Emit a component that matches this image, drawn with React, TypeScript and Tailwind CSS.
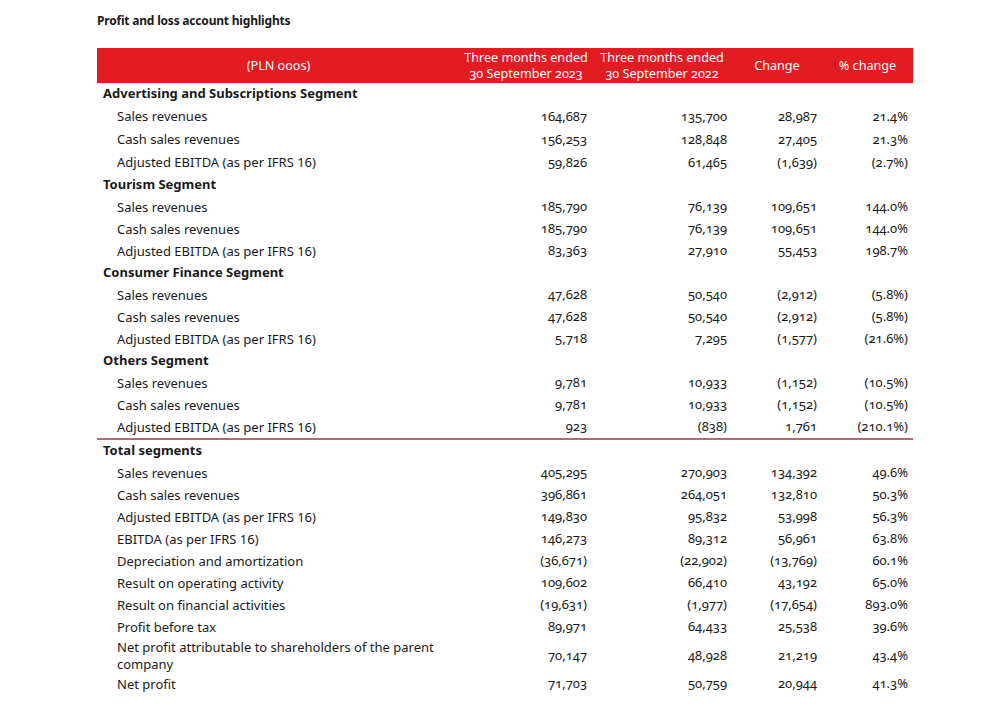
type Row = {
  label: string;
  values?: string[];
  kind: "section" | "item";
  h?: string;
};

const rows: Row[] = [
  { label: "Advertising and Subscriptions Segment", kind: "section", h: "h-[22px]" },
  { label: "Sales revenues", values: ["164,687", "135,700", "28,987", "21.4%"], kind: "item", h: "h-[23px]" },
  { label: "Cash sales revenues", values: ["156,253", "128,848", "27,405", "21.3%"], kind: "item", h: "h-[23px]" },
  { label: "Adjusted EBITDA (as per IFRS 16)", values: ["59,826", "61,465", "(1,639)", "(2.7%)"], kind: "item", h: "h-[23px]" },
  { label: "Tourism Segment", kind: "section" },
  { label: "Sales revenues", values: ["185,790", "76,139", "109,651", "144.0%"], kind: "item" },
  { label: "Cash sales revenues", values: ["185,790", "76,139", "109,651", "144.0%"], kind: "item" },
  { label: "Adjusted EBITDA (as per IFRS 16)", values: ["83,363", "27,910", "55,453", "198.7%"], kind: "item" },
  { label: "Consumer Finance Segment", kind: "section" },
  { label: "Sales revenues", values: ["47,628", "50,540", "(2,912)", "(5.8%)"], kind: "item" },
  { label: "Cash sales revenues", values: ["47,628", "50,540", "(2,912)", "(5.8%)"], kind: "item" },
  { label: "Adjusted EBITDA (as per IFRS 16)", values: ["5,718", "7,295", "(1,577)", "(21.6%)"], kind: "item" },
  { label: "Others Segment", kind: "section" },
  { label: "Sales revenues", values: ["9,781", "10,933", "(1,152)", "(10.5%)"], kind: "item" },
  { label: "Cash sales revenues", values: ["9,781", "10,933", "(1,152)", "(10.5%)"], kind: "item" },
  { label: "Adjusted EBITDA (as per IFRS 16)", values: ["923", "(838)", "1,761", "(210.1%)"], kind: "item" },
];

const totals: Row[] = [
  { label: "Total segments", kind: "section" },
  { label: "Sales revenues", values: ["405,295", "270,903", "134,392", "49.6%"], kind: "item" },
  { label: "Cash sales revenues", values: ["396,861", "264,051", "132,810", "50.3%"], kind: "item" },
  { label: "Adjusted EBITDA (as per IFRS 16)", values: ["149,830", "95,832", "53,998", "56.3%"], kind: "item" },
  { label: "EBITDA (as per IFRS 16)", values: ["146,273", "89,312", "56,961", "63.8%"], kind: "item" },
  { label: "Depreciation and amortization", values: ["(36,671)", "(22,902)", "(13,769)", "60.1%"], kind: "item" },
  { label: "Result on operating activity", values: ["109,602", "66,410", "43,192", "65.0%"], kind: "item" },
  { label: "Result on financial activities", values: ["(19,631)", "(1,977)", "(17,654)", "893.0%"], kind: "item" },
  { label: "Profit before tax", values: ["89,971", "64,433", "25,538", "39.6%"], kind: "item" },
  {
    label: "Net profit attributable to shareholders of the parent company",
    values: ["70,147", "48,928", "21,219", "43.4%"],
    kind: "item",
    h: "h-[36px]",
  },
  { label: "Net profit", values: ["71,703", "50,759", "20,944", "41.3%"], kind: "item", h: "h-[20px]" },
];

function TableRow({ row }: { row: Row }) {
  return (
    <div className={`grid grid-cols-[363px_132px_140px_90px_91px] items-center ${row.h ?? "h-[22px]"}`}>
      {row.kind === "section" ? (
        <div className="pl-[6px] font-bold">{row.label}</div>
      ) : (
        <div className="pl-[20px] pr-[20px] leading-[17px]">{row.label}</div>
      )}
      {(row.values ?? ["", "", "", ""]).map((v, i) => (
        <div key={i} className="text-right pr-[5px] oldstyle-nums">
          {v}
        </div>
      ))}
    </div>
  );
}

export default function App() {
  return (
    <div
      className="w-[1000px] h-[714px] bg-white text-[#1a1a1a] text-[13px] pl-[97px] pt-[12px]"
      style={{ fontFamily: '"Noto Sans", "Open Sans", sans-serif' }}
    >
      <h1 className="text-[12px] font-bold tracking-[-0.2px] h-[36px] leading-[18px]">
        Profit and loss account highlights
      </h1>
      <div className="w-[816px]">
        {/* Header */}
        <div className="grid grid-cols-[363px_132px_140px_90px_91px] items-center h-[35px] bg-[#e31b23] text-white text-[12.6px] leading-[16px] oldstyle-nums">
          <div className="text-center">(PLN ooos)</div>
          <div className="text-center">
            Three months ended
            <br />
            30 September 2023
          </div>
          <div className="text-center">
            Three months ended
            <br />
            30 September 2022
          </div>
          <div className="text-center">Change</div>
          <div className="text-center">% change</div>
        </div>

        {rows.map((r, i) => (
          <TableRow key={i} row={r} />
        ))}
        <div className="h-[2px] bg-[#b5696b]" />
        {totals.map((r, i) => (
          <TableRow key={i} row={r} />
        ))}
      </div>
    </div>
  );
}
